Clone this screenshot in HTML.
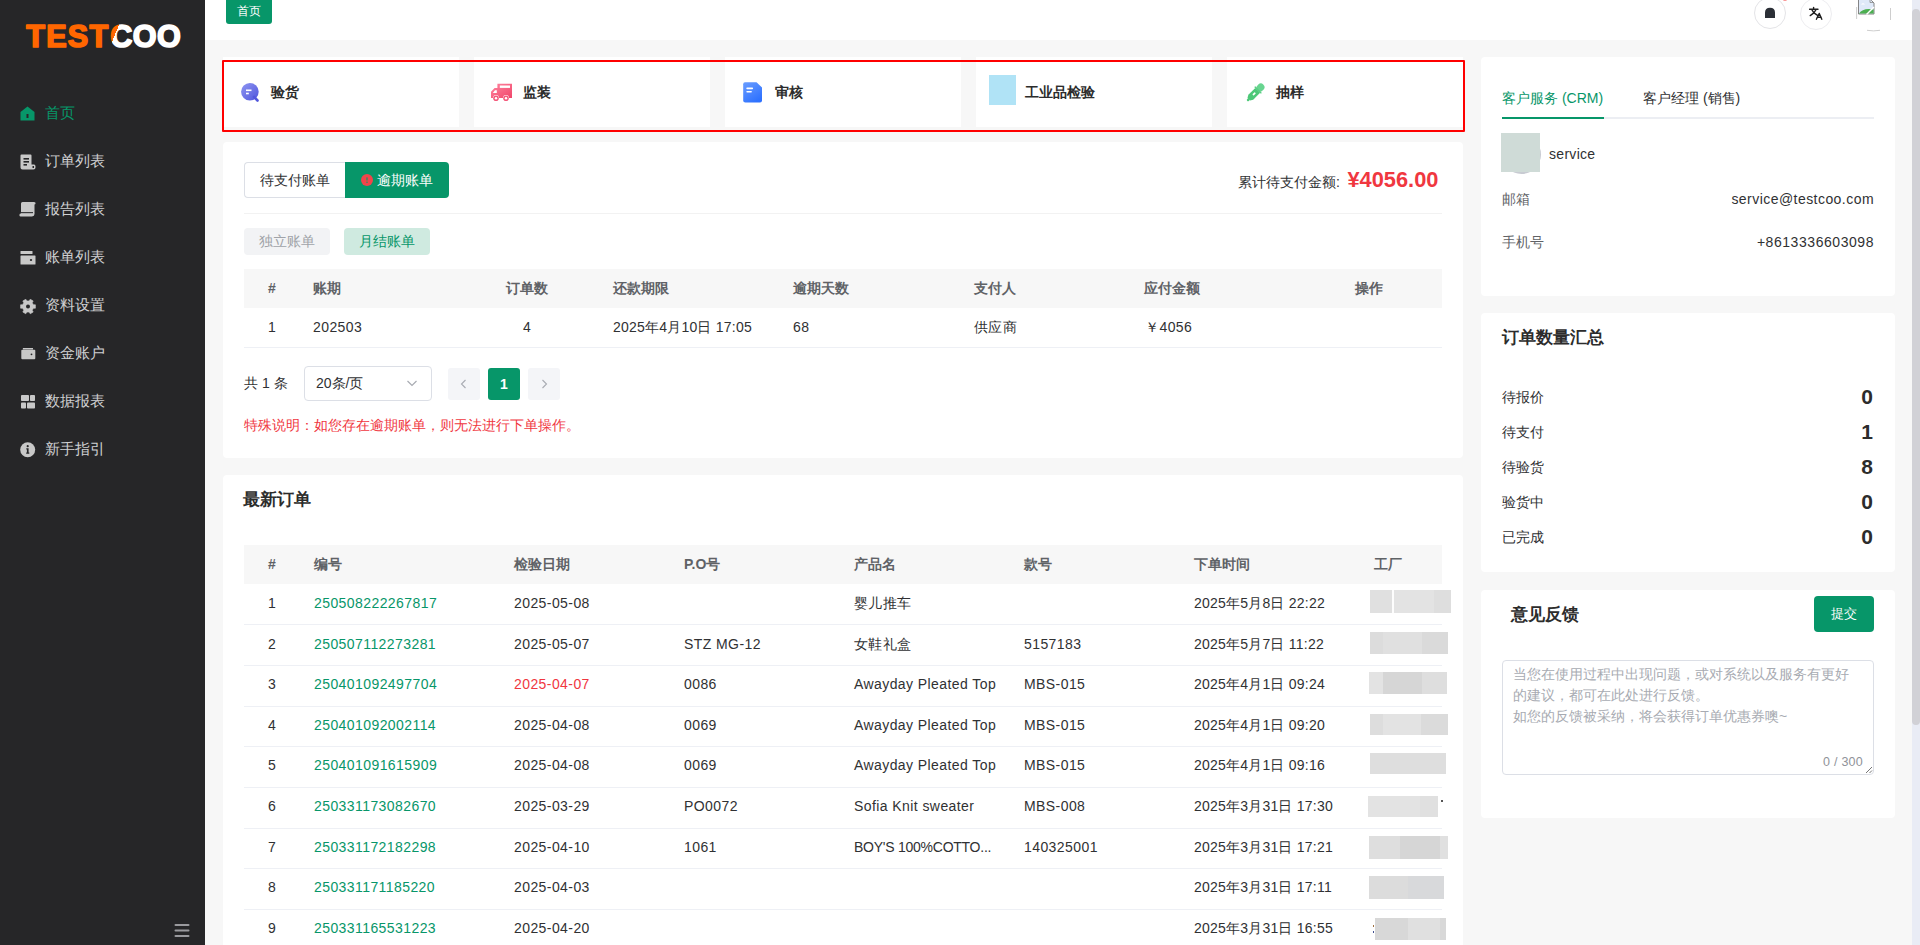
<!DOCTYPE html>
<html><head><meta charset="utf-8">
<style>
*{box-sizing:border-box;margin:0;padding:0}
html,body{width:1920px;height:945px;overflow:hidden}
body{font-family:"Liberation Sans",sans-serif;font-size:14px;color:#303133;background:#f7f7f7;position:relative}
.abs{position:absolute}
.side{position:absolute;left:0;top:0;width:205px;height:945px;background:#262628}
.logo{position:absolute;left:25px;top:17px;font-weight:bold;font-size:31.5px;letter-spacing:0.4px;line-height:38px;white-space:nowrap}
.menu{position:absolute;left:0;width:205px;height:48px;color:#cfd0d2;font-size:15px;line-height:20px}
.menu .t{position:absolute;left:45px;top:3px}
.menu svg{position:absolute;left:20px;top:6px}
.hdr{position:absolute;left:205px;top:0;width:1707px;height:40px;background:#fff}
.card{position:absolute;background:#fff;border-radius:4px}
.g{color:#079669}
.scroll{position:absolute;left:1912px;top:0;width:8px;height:945px;background:#e9ecf5}
.thumb{position:absolute;left:1912px;top:9px;width:8px;height:716px;background:#d1d1d6;border-radius:4px}
.th{position:absolute;font-weight:bold;color:#5f6266;font-size:14px;line-height:20px;white-space:nowrap}
.td{position:absolute;color:#303133;font-size:14px;line-height:20px;white-space:nowrap;letter-spacing:0.42px}
</style></head><body>
<!-- sidebar -->
<div class="side">
  <svg class="abs" style="left:0;top:0" width="205" height="60" viewBox="0 0 205 60"><defs><linearGradient id="lg" gradientUnits="userSpaceOnUse" x1="107" y1="30" x2="124" y2="37"><stop offset="0.5" stop-color="#ff6600"/><stop offset="0.5" stop-color="#ffffff"/></linearGradient></defs><g font-family="Liberation Sans" font-weight="bold" font-size="30.6" stroke-width="1.7" stroke-linejoin="round"><text id="lt" x="26.3" y="47.3" fill="#ff6600" stroke="#ff6600" letter-spacing="1.2">TEST</text><text id="lc" x="110.2" y="47.3" fill="url(#lg)" stroke="url(#lg)" letter-spacing="0.5">COO</text></g></svg>

  <div class="menu g" style="top:89px;color:#079669"><svg width="15" height="15" viewBox="0 0 15 15" style="left:20px;top:17px"><path d="M7.5 0.5 L14.5 6 V14.5 H0.5 V6 Z" fill="#079669"/><rect x="6.5" y="8" width="2" height="4" fill="#262628"/></svg><span class="t" style="top:14px">首页</span></div>
  <div class="menu" style="top:137px"><svg width="17" height="17" viewBox="0 0 17 17" style="left:20px;top:17px"><path d="M1.5 0.5 H10.5 Q11.5 0.5 11.5 1.5 V10.5 H14 Q15.5 10.5 15.5 12.5 V13.5 Q15.5 15.5 13.5 15.5 H2.5 Q0.5 15.5 0.5 13.5 V1.5 Q0.5 0.5 1.5 0.5Z" fill="#c8c8c8"/><rect x="3.5" y="4" width="5.5" height="1.6" fill="#262628"/><rect x="3.5" y="7" width="5.5" height="1.6" fill="#262628"/><rect x="3.5" y="10" width="3.5" height="1.6" fill="#262628"/><rect x="12.5" y="12" width="1.5" height="2" fill="#262628"/></svg><span class="t" style="top:14px">订单列表</span></div>
  <div class="menu" style="top:185px"><svg width="17" height="17" viewBox="0 0 17 17" style="left:19px;top:17px"><path d="M3.5 0 H15 Q17 0 16.5 2 L15.5 2.5 V12 Q15.5 14 13 14.5 H1.5 Q0 14.5 0.5 12.5 Q0.5 11.5 2 11.5 V1.5 Q2 0 3.5 0Z" fill="#c8c8c8"/><rect x="2" y="10" width="12" height="1.2" fill="#3a3a3c"/></svg><span class="t" style="top:14px">报告列表</span></div>
  <div class="menu" style="top:233px"><svg width="17" height="17" viewBox="0 0 17 17" style="left:20px;top:17px"><rect x="0.5" y="1" width="12" height="3" rx="0.5" fill="#c8c8c8"/><rect x="0.5" y="5.5" width="15" height="9" rx="0.6" fill="#c8c8c8"/><ellipse cx="11" cy="10" rx="1.2" ry="0.9" fill="#262628"/></svg><span class="t" style="top:14px">账单列表</span></div>
  <div class="menu" style="top:281px"><svg width="17" height="17" viewBox="0 0 17 17" style="left:20px;top:17.5px"><path d="M12.85 4.70 L13.29 5.68 L15.41 5.79 L15.41 9.21 L13.29 9.32 L12.85 10.30 L12.23 11.17 L13.18 13.06 L10.22 14.77 L9.07 13.00 L8.00 13.10 L6.93 13.00 L5.78 14.77 L2.82 13.06 L3.77 11.17 L3.15 10.30 L2.71 9.32 L0.59 9.21 L0.59 5.79 L2.71 5.68 L3.15 4.70 L3.77 3.83 L2.82 1.94 L5.78 0.23 L6.93 2.00 L8.00 1.90 L9.07 2.00 L10.22 0.23 L13.18 1.94 L12.23 3.83Z" fill="#c8c8c8" stroke="#c8c8c8" stroke-width="0.6" stroke-linejoin="round"/><circle cx="8" cy="7.5" r="2" fill="#262628"/></svg><span class="t" style="top:14px">资料设置</span></div>
  <div class="menu" style="top:329px"><svg width="17" height="17" viewBox="0 0 17 17" style="left:21px;top:18px"><path d="M1.5 1 H12 V2.5 H2 V1.5Z" fill="#c8c8c8"/><rect x="0.3" y="2.8" width="14" height="9.5" rx="1" fill="#c8c8c8"/><circle cx="10.5" cy="7.3" r="0.9" fill="#262628"/></svg><span class="t" style="top:14px">资金账户</span></div>
  <div class="menu" style="top:377px"><svg width="16" height="16" viewBox="0 0 16 16" style="left:21px;top:18px"><rect x="0" y="0" width="8" height="6" rx="0.8" fill="#c8c8c8"/><rect x="9" y="0" width="5" height="6" rx="0.8" fill="#c8c8c8"/><rect x="0" y="7.5" width="5" height="6" rx="0.8" fill="#c8c8c8"/><rect x="6" y="7.5" width="8" height="6" rx="0.8" fill="#c8c8c8"/></svg><span class="t" style="top:14px">数据报表</span></div>
  <div class="menu" style="top:425px"><svg width="16" height="16" viewBox="0 0 16 16" style="left:20px;top:17px"><circle cx="7.7" cy="7.7" r="7.5" fill="#c8c8c8"/><circle cx="7.7" cy="4.2" r="1.1" fill="#262628"/><path d="M6.3 6.2 H8.6 V10.6 H9.3 V11.8 H6.2 V10.6 H6.9 V7.4 H6.3Z" fill="#262628"/></svg><span class="t" style="top:14px">新手指引</span></div>
  <svg class="abs" style="left:173px;top:922px" width="18" height="16" viewBox="0 0 18 16"><rect x="1.5" y="2" width="15" height="2" rx="1" fill="#9a9a9e"/><rect x="1.5" y="7.5" width="15" height="2" rx="1" fill="#9a9a9e"/><rect x="1.5" y="13" width="15" height="2" rx="1" fill="#9a9a9e"/></svg>
</div>
<div class="hdr"></div>
<div class="abs" style="left:226px;top:0;width:46px;height:24px;background:#079669;border-radius:0 0 3px 3px;color:#fff;font-size:12px;line-height:23px;text-align:center">首页</div>
<!-- header icons -->
<div class="abs" style="left:1754px;top:-3px;width:32px;height:32px;border:1px solid #e4e4e7;border-radius:50%"></div>
<svg class="abs" style="left:1764px;top:7px" width="12" height="12" viewBox="0 0 12 12"><path d="M1 11 V5.5 Q1 0.8 6 0.8 Q11 0.8 11 5.5 V11Z" fill="#2b2f36"/></svg>
<div class="abs" style="left:1783px;top:-2px;width:4px;height:3px;background:#f56c6c;border-radius:2px;opacity:.7"></div>
<div class="abs" style="left:1800px;top:-2px;width:32px;height:32px;border:1px solid #ededf0;border-radius:50%"></div>
<svg class="abs" style="left:1800px;top:0" width="35" height="30" viewBox="0 0 35 30"><g stroke="#1f1f1f" stroke-width="1.35" fill="none" stroke-linecap="round" stroke-linejoin="round"><path d="M9.6 9.2 H18"/><path d="M13.6 7.4 V9"/><path d="M11.8 9.6 L13.9 12.9 L16 9.6"/><path d="M13.9 12.9 L10.2 15.6"/><path d="M13.9 12.9 L17.6 15.4"/><path d="M16.4 19.3 L19.3 13.4 L21.8 19.3"/><path d="M17.4 17.2 H20.8"/></g></svg>
<svg class="abs" style="left:1850px;top:0" width="48" height="36" viewBox="0 0 48 36"><path d="M6.6 7 V19" stroke="#c8c8c8" stroke-width="0.9"/><path d="M40.5 8 V20" stroke="#c8c8c8" stroke-width="0.9"/><path d="M17 30.3 Q23.5 31.5 30 30.3" stroke="#c8c8c8" stroke-width="0.9" fill="none"/><path d="M8.5 -1 V14 H24 V3 L21.5 0.5 V-1" fill="#dfe9f8" stroke="#777" stroke-width="0.9"/><path d="M20 -1 V2.5 H24" fill="none" stroke="#888" stroke-width="0.8"/><path d="M9 13.6 Q13 7.5 23.6 9.5 V13.6Z" fill="#4caf50"/><path d="M16.5 14.5 L24 7" stroke="#fff" stroke-width="1.4"/><path d="M11 4.5 Q13 2 15 4.5Z" fill="#fff"/></svg>
<!-- quick cards -->
<div class="card" style="left:223px;top:57px;width:236px;height:70px;border-radius:0"></div>
<div class="card" style="left:474px;top:57px;width:236px;height:70px;border-radius:0"></div>
<div class="card" style="left:725px;top:57px;width:236px;height:70px;border-radius:0"></div>
<div class="card" style="left:976px;top:57px;width:236px;height:70px;border-radius:0"></div>
<div class="card" style="left:1227px;top:57px;width:236px;height:70px;border-radius:0"></div>
<div class="abs" style="left:222px;top:60px;width:1243px;height:72px;border:2px solid #ff0000;border-radius:1px"></div>
<svg class="abs" style="left:241px;top:83px" width="19" height="20" viewBox="0 0 19 20"><defs><linearGradient id="gp" x1="0" y1="0" x2="1" y2="1"><stop offset="0" stop-color="#8f96f2"/><stop offset="1" stop-color="#4f55dc"/></linearGradient></defs><circle cx="8.9" cy="8.8" r="8.8" fill="url(#gp)"/><path d="M13 14 L16.5 17.5" stroke="#5257dc" stroke-width="2.6" stroke-linecap="round"/><rect x="5" y="6.5" width="5.5" height="1.6" fill="#fff"/><rect x="5" y="9.7" width="2.8" height="1.6" fill="#fff"/></svg>
<div class="abs" style="left:271px;top:82px;font-size:14px;font-weight:bold;color:#2c2c2c;line-height:20px">验货</div>
<svg class="abs" style="left:491px;top:83px" width="22" height="19" viewBox="0 0 22 19"><defs><linearGradient id="gr" x1="0" y1="0" x2="1" y2="1"><stop offset="0" stop-color="#ff86a0"/><stop offset="1" stop-color="#f0456a"/></linearGradient></defs><path d="M6.4 0.8 H21 V15 H18 A3 3 0 0 0 12 15 H8 A3 3 0 0 0 2 15 H0 V8.8 L3.6 5 H6.4Z" fill="url(#gr)"/><rect x="8.8" y="2.5" width="10.2" height="2.4" fill="#fff"/><path d="M1.8 10 L4 7.2 H5.8 V10Z" fill="#fff"/><circle cx="5" cy="15.3" r="2.8" fill="#f35a7c"/><circle cx="5" cy="15.3" r="1.2" fill="#fff"/><circle cx="15" cy="15.3" r="2.8" fill="#f35a7c"/><circle cx="15" cy="15.3" r="1.2" fill="#fff"/></svg>
<div class="abs" style="left:523px;top:82px;font-size:14px;font-weight:bold;color:#2c2c2c;line-height:20px">监装</div>
<svg class="abs" style="left:743px;top:82px" width="20" height="21" viewBox="0 0 20 21"><defs><linearGradient id="gb" x1="0" y1="0" x2="0.6" y2="1"><stop offset="0" stop-color="#6a9dff"/><stop offset="1" stop-color="#2f72ff"/></linearGradient></defs><path d="M2 0.3 H13.5 L19 5.5 V18.5 Q19 20.6 17 20.6 H2.3 Q0.2 20.6 0.2 18.5 V2.3 Q0.2 0.3 2 0.3Z" fill="url(#gb)"/><rect x="3.3" y="5.6" width="6.8" height="1.6" rx="0.8" fill="#fff"/><rect x="3.3" y="8.9" width="5.6" height="1.6" rx="0.8" fill="#fff"/></svg>
<div class="abs" style="left:775px;top:82px;font-size:14px;font-weight:bold;color:#2c2c2c;line-height:20px">审核</div>
<div class="abs" style="left:989px;top:75px;width:27px;height:30px;background:#b0e3f6"></div>
<div class="abs" style="left:1025px;top:82px;font-size:14px;font-weight:bold;color:#2c2c2c;line-height:20px">工业品检验</div>
<svg class="abs" style="left:1244px;top:81px" width="24" height="24" viewBox="0 0 24 24"><g transform="translate(11.2 11.8) rotate(45) scale(1.1) translate(0 -0.3)"><rect x="-3.3" y="-10.2" width="6.6" height="7.5" rx="3.2" fill="#68d590"/><rect x="-4.3" y="-4" width="8.6" height="1.3" rx="0.5" fill="#5ccd85"/><path d="M-3.1 -2.9 H3.1 V6 L1.6 8.6 H-1.6 L-3.1 6Z" fill="#4dc878"/><rect x="-1.1" y="8" width="2.2" height="2.6" rx="1" fill="#4dc878"/><rect x="-0.8" y="0.2" width="1.6" height="3" rx="0.5" fill="#fff"/></g></svg>
<div class="abs" style="left:1276px;top:82px;font-size:14px;font-weight:bold;color:#2c2c2c;line-height:20px">抽样</div>
<div class="card" style="left:223px;top:142px;width:1240px;height:316px"></div>
<div class="abs" style="left:244px;top:162px;width:101px;height:36px;border:1px solid #dcdfe6;border-right:none;border-radius:4px 0 0 4px;background:#fff;color:#303133;font-size:14px;line-height:34px;text-align:center">待支付账单</div>
<div class="abs" style="left:345px;top:162px;width:104px;height:36px;background:#079669;border-radius:0 4px 4px 0;color:#fff;font-size:14px;line-height:36px"><svg style="position:absolute;left:16px;top:11.5px" width="12" height="12" viewBox="0 0 12 12"><circle cx="6" cy="6" r="6" fill="#f2444a"/><rect x="5.1" y="3.3" width="1.8" height="3.3" rx="0.6" fill="#3a8a60" opacity=".8"/><rect x="5.1" y="7.6" width="1.8" height="1.3" rx="0.5" fill="#3a8a60" opacity=".8"/></svg><span style="position:absolute;left:32px;top:0">逾期账单</span></div>
<div class="abs" style="left:1238px;top:172px;font-size:14px;color:#303133;line-height:20px;white-space:nowrap">累计待支付金额:</div>
<div class="abs" style="left:1347.5px;top:166px;font-size:21.8px;font-weight:bold;color:#f0373f;line-height:28px;white-space:nowrap">¥4056.00</div>
<div class="abs" style="left:244px;top:213px;width:1198px;height:1px;background:#f2f2f2"></div>
<div class="abs" style="left:244px;top:228px;width:86px;height:27px;background:#f2f3f5;border-radius:4px;color:#a0a3a8;font-size:14px;line-height:27px;text-align:center">独立账单</div>
<div class="abs" style="left:344px;top:228px;width:86px;height:27px;background:#cfeae0;border-radius:4px;color:#079669;font-size:14px;line-height:27px;text-align:center">月结账单</div>
<div class="abs" style="left:244px;top:269px;width:1198px;height:39px;background:#f7f7f7"></div>
<div class="abs" style="left:244px;top:347px;width:1198px;height:1px;background:#eef0f5"></div>
<div class="th" style="left:212px;top:278px;width:120px;text-align:center">#</div>
<div class="th" style="left:313px;top:278px">账期</div>
<div class="th" style="left:467px;top:278px;width:120px;text-align:center">订单数</div>
<div class="th" style="left:613px;top:278px">还款期限</div>
<div class="th" style="left:793px;top:278px">逾期天数</div>
<div class="th" style="left:974px;top:278px">支付人</div>
<div class="th" style="left:1144px;top:278px">应付金额</div>
<div class="th" style="left:1309px;top:278px;width:120px;text-align:center">操作</div>
<div class="td" style="left:212px;top:317px;width:120px;text-align:center;">1</div>
<div class="td" style="left:313px;top:317px;">202503</div>
<div class="td" style="left:467px;top:317px;width:120px;text-align:center;">4</div>
<div class="td" style="left:613px;top:317px;letter-spacing:0.22px;">2025年4月10日 17:05</div>
<div class="td" style="left:793px;top:317px;">68</div>
<div class="td" style="left:974px;top:317px;">供应商</div>
<div class="td" style="left:1145px;top:317px;">￥4056</div>
<div class="abs" style="left:244px;top:373px;font-size:14px;color:#303133;line-height:20px;white-space:nowrap">共 1 条</div>
<div class="abs" style="left:304px;top:366px;width:128px;height:35px;border:1px solid #dcdfe6;border-radius:4px;background:#fff"></div>
<div class="abs" style="left:316px;top:373px;font-size:14px;color:#303133;line-height:20px;white-space:nowrap">20条/页</div>
<svg class="abs" style="left:406px;top:378px" width="12" height="10" viewBox="0 0 12 10"><path d="M1.5 3 L6 7.5 L10.5 3" stroke="#a8abb2" stroke-width="1.2" fill="none"/></svg>
<div class="abs" style="left:448px;top:368px;width:32px;height:32px;background:#f4f5f8;border-radius:3px"></div>
<svg class="abs" style="left:458px;top:378px" width="12" height="12" viewBox="0 0 12 12"><path d="M7.5 2 L3.5 6 L7.5 10" stroke="#a8abb2" stroke-width="1.1" fill="none"/></svg>
<div class="abs" style="left:488px;top:368px;width:32px;height:32px;background:#079669;border-radius:3px;color:#fff;font-weight:bold;font-size:14px;line-height:32px;text-align:center">1</div>
<div class="abs" style="left:528px;top:368px;width:32px;height:32px;background:#f4f5f8;border-radius:3px"></div>
<svg class="abs" style="left:538px;top:378px" width="12" height="12" viewBox="0 0 12 12"><path d="M4.5 2 L8.5 6 L4.5 10" stroke="#a8abb2" stroke-width="1.1" fill="none"/></svg>
<div class="abs" style="left:244px;top:416px;font-size:13.6px;color:#f0373f;line-height:20px;white-space:nowrap">特殊说明：如您存在逾期账单，则无法进行下单操作。</div>
<div class="card" style="left:223px;top:475px;width:1240px;height:480px"></div>
<div class="abs" style="left:243px;top:489px;font-size:17px;font-weight:bold;color:#2c2c2c;line-height:22px">最新订单</div>
<div class="abs" style="left:244px;top:545px;width:1198px;height:39px;background:#f7f7f7"></div>
<div class="th" style="left:212px;top:554px;width:120px;text-align:center">#</div>
<div class="th" style="left:314px;top:554px">编号</div>
<div class="th" style="left:514px;top:554px">检验日期</div>
<div class="th" style="left:684px;top:554px">P.O号</div>
<div class="th" style="left:854px;top:554px">产品名</div>
<div class="th" style="left:1024px;top:554px">款号</div>
<div class="th" style="left:1194px;top:554px">下单时间</div>
<div class="th" style="left:1374px;top:554px">工厂</div>
<div class="abs" style="left:244px;top:624.30px;width:1198px;height:1px;background:#eef0f5"></div>
<div class="td" style="left:212px;top:592.91px;width:120px;text-align:center;">1</div>
<div class="td" style="left:314px;top:592.91px;color:#079669;">250508222267817</div>
<div class="td" style="left:514px;top:592.91px;">2025-05-08</div>
<div class="td" style="left:684px;top:592.91px;"></div>
<div class="td" style="left:854px;top:592.91px;">婴儿推车</div>
<div class="td" style="left:1024px;top:592.91px;"></div>
<div class="td" style="left:1194px;top:592.91px;letter-spacing:0.22px;">2025年5月8日 22:22</div>
<div class="abs" style="left:1370px;top:590px;width:22px;height:23.0px;background:#e0e0e0"></div>
<div class="abs" style="left:1392px;top:590px;width:2px;height:23.0px;background:#fdfdfd"></div>
<div class="abs" style="left:1394px;top:590px;width:40px;height:23.0px;background:#e3e3e3"></div>
<div class="abs" style="left:1434px;top:590px;width:17px;height:23.0px;background:#dedede"></div>
<div class="abs" style="left:244px;top:664.94px;width:1198px;height:1px;background:#eef0f5"></div>
<div class="td" style="left:212px;top:633.55px;width:120px;text-align:center;">2</div>
<div class="td" style="left:314px;top:633.55px;color:#079669;">250507112273281</div>
<div class="td" style="left:514px;top:633.55px;">2025-05-07</div>
<div class="td" style="left:684px;top:633.55px;">STZ MG-12</div>
<div class="td" style="left:854px;top:633.55px;">女鞋礼盒</div>
<div class="td" style="left:1024px;top:633.55px;">5157183</div>
<div class="td" style="left:1194px;top:633.55px;letter-spacing:0.22px;">2025年5月7日 11:22</div>
<div class="abs" style="left:1370px;top:632px;width:13px;height:22.0px;background:#dcdcdc"></div>
<div class="abs" style="left:1383px;top:632px;width:39px;height:22.0px;background:#e0e0e0"></div>
<div class="abs" style="left:1422px;top:632px;width:26px;height:22.0px;background:#dadada"></div>
<div class="abs" style="left:244px;top:705.58px;width:1198px;height:1px;background:#eef0f5"></div>
<div class="td" style="left:212px;top:674.19px;width:120px;text-align:center;">3</div>
<div class="td" style="left:314px;top:674.19px;color:#079669;">250401092497704</div>
<div class="td" style="left:514px;top:674.19px;color:#f0373f;">2025-04-07</div>
<div class="td" style="left:684px;top:674.19px;">0086</div>
<div class="td" style="left:854px;top:674.19px;">Awayday Pleated Top</div>
<div class="td" style="left:1024px;top:674.19px;">MBS-015</div>
<div class="td" style="left:1194px;top:674.19px;letter-spacing:0.22px;">2025年4月1日 09:24</div>
<div class="abs" style="left:1369px;top:672px;width:14px;height:22.0px;background:#e3e3e3"></div>
<div class="abs" style="left:1383px;top:672px;width:39px;height:22.0px;background:#d6d6d6"></div>
<div class="abs" style="left:1422px;top:672px;width:25px;height:22.0px;background:#dedede"></div>
<div class="abs" style="left:244px;top:746.22px;width:1198px;height:1px;background:#eef0f5"></div>
<div class="td" style="left:212px;top:714.83px;width:120px;text-align:center;">4</div>
<div class="td" style="left:314px;top:714.83px;color:#079669;">250401092002114</div>
<div class="td" style="left:514px;top:714.83px;">2025-04-08</div>
<div class="td" style="left:684px;top:714.83px;">0069</div>
<div class="td" style="left:854px;top:714.83px;">Awayday Pleated Top</div>
<div class="td" style="left:1024px;top:714.83px;">MBS-015</div>
<div class="td" style="left:1194px;top:714.83px;letter-spacing:0.22px;">2025年4月1日 09:20</div>
<div class="abs" style="left:1370px;top:714px;width:13px;height:20.5px;background:#dddddd"></div>
<div class="abs" style="left:1383px;top:714px;width:38px;height:20.5px;background:#e3e3e3"></div>
<div class="abs" style="left:1421px;top:714px;width:27px;height:20.5px;background:#dbdbdb"></div>
<div class="abs" style="left:244px;top:786.86px;width:1198px;height:1px;background:#eef0f5"></div>
<div class="td" style="left:212px;top:755.47px;width:120px;text-align:center;">5</div>
<div class="td" style="left:314px;top:755.47px;color:#079669;">250401091615909</div>
<div class="td" style="left:514px;top:755.47px;">2025-04-08</div>
<div class="td" style="left:684px;top:755.47px;">0069</div>
<div class="td" style="left:854px;top:755.47px;">Awayday Pleated Top</div>
<div class="td" style="left:1024px;top:755.47px;">MBS-015</div>
<div class="td" style="left:1194px;top:755.47px;letter-spacing:0.22px;">2025年4月1日 09:16</div>
<div class="abs" style="left:1370px;top:753px;width:76px;height:21.0px;background:#dedede"></div>
<div class="abs" style="left:244px;top:827.50px;width:1198px;height:1px;background:#eef0f5"></div>
<div class="td" style="left:212px;top:796.11px;width:120px;text-align:center;">6</div>
<div class="td" style="left:314px;top:796.11px;color:#079669;">250331173082670</div>
<div class="td" style="left:514px;top:796.11px;">2025-03-29</div>
<div class="td" style="left:684px;top:796.11px;">PO0072</div>
<div class="td" style="left:854px;top:796.11px;">Sofia Knit sweater</div>
<div class="td" style="left:1024px;top:796.11px;">MBS-008</div>
<div class="td" style="left:1194px;top:796.11px;letter-spacing:0.22px;">2025年3月31日 17:30</div>
<div class="abs" style="left:1368px;top:796px;width:52px;height:20.6px;background:#e3e3e3"></div>
<div class="abs" style="left:1420px;top:796px;width:18px;height:20.6px;background:#e0e0e0"></div>
<div class="abs" style="left:244px;top:868.14px;width:1198px;height:1px;background:#eef0f5"></div>
<div class="td" style="left:212px;top:836.75px;width:120px;text-align:center;">7</div>
<div class="td" style="left:314px;top:836.75px;color:#079669;">250331172182298</div>
<div class="td" style="left:514px;top:836.75px;">2025-04-10</div>
<div class="td" style="left:684px;top:836.75px;">1061</div>
<div class="td" style="left:854px;top:836.75px;letter-spacing:-0.25px">BOY'S 100%COTTO...</div>
<div class="td" style="left:1024px;top:836.75px;">140325001</div>
<div class="td" style="left:1194px;top:836.75px;letter-spacing:0.22px;">2025年3月31日 17:21</div>
<div class="abs" style="left:1369px;top:836px;width:31px;height:22.5px;background:#dedede"></div>
<div class="abs" style="left:1400px;top:836px;width:40px;height:22.5px;background:#d6d6d6"></div>
<div class="abs" style="left:1440px;top:836px;width:8px;height:22.5px;background:#e0e0e0"></div>
<div class="abs" style="left:244px;top:908.78px;width:1198px;height:1px;background:#eef0f5"></div>
<div class="td" style="left:212px;top:877.39px;width:120px;text-align:center;">8</div>
<div class="td" style="left:314px;top:877.39px;color:#079669;">250331171185220</div>
<div class="td" style="left:514px;top:877.39px;">2025-04-03</div>
<div class="td" style="left:684px;top:877.39px;"></div>
<div class="td" style="left:854px;top:877.39px;"></div>
<div class="td" style="left:1024px;top:877.39px;"></div>
<div class="td" style="left:1194px;top:877.39px;letter-spacing:0.22px;">2025年3月31日 17:11</div>
<div class="abs" style="left:1369px;top:876px;width:39px;height:22.7px;background:#dcdcdc"></div>
<div class="abs" style="left:1408px;top:876px;width:36px;height:22.7px;background:#d8d9db"></div>
<div class="abs" style="left:244px;top:949.42px;width:1198px;height:1px;background:#eef0f5"></div>
<div class="td" style="left:212px;top:918.03px;width:120px;text-align:center;">9</div>
<div class="td" style="left:314px;top:918.03px;color:#079669;">250331165531223</div>
<div class="td" style="left:514px;top:918.03px;">2025-04-20</div>
<div class="td" style="left:684px;top:918.03px;"></div>
<div class="td" style="left:854px;top:918.03px;"></div>
<div class="td" style="left:1024px;top:918.03px;"></div>
<div class="td" style="left:1194px;top:918.03px;letter-spacing:0.22px;">2025年3月31日 16:55</div>
<div class="abs" style="left:1375px;top:917.6px;width:33px;height:22.0px;background:#d8d8d8"></div>
<div class="abs" style="left:1408px;top:917.6px;width:32px;height:22.0px;background:#e0e0e0"></div>
<div class="abs" style="left:1440px;top:917.6px;width:6px;height:22.0px;background:#d8d8d8"></div>
<div class="card" style="left:1481px;top:57px;width:414px;height:239px"></div>
<div class="abs" style="left:1502px;top:88px;font-size:14px;color:#079669;line-height:20px;white-space:nowrap">客户服务 (CRM)</div>
<div class="abs" style="left:1643px;top:88px;font-size:14px;color:#303133;line-height:20px;white-space:nowrap">客户经理 (销售)</div>
<div class="abs" style="left:1502px;top:117px;width:372px;height:2px;background:#eceef3"></div>
<div class="abs" style="left:1502px;top:117px;width:102px;height:2px;background:#079669"></div>
<div class="abs" style="left:1502px;top:135px;width:39px;height:39px;border-radius:50%;background:#c8cbd2"></div>
<div class="abs" style="left:1501px;top:133px;width:39px;height:39px;background:#cfdbd7"></div>
<div class="abs" style="left:1549px;top:144px;font-size:14px;color:#303133;line-height:20px;letter-spacing:0.3px">service</div>
<div class="abs" style="left:1502px;top:189px;font-size:14px;color:#606266;line-height:20px">邮箱</div>
<div class="abs" style="left:1674px;top:189px;width:200px;text-align:right;font-size:14px;color:#303133;line-height:20px;letter-spacing:0.45px">service@testcoo.com</div>
<div class="abs" style="left:1502px;top:232px;font-size:14px;color:#606266;line-height:20px">手机号</div>
<div class="abs" style="left:1674px;top:232px;width:200px;text-align:right;font-size:14px;color:#303133;line-height:20px;letter-spacing:0.55px">+8613336603098</div>
<div class="card" style="left:1481px;top:313px;width:414px;height:259px"></div>
<div class="abs" style="left:1502px;top:327px;font-size:17px;font-weight:bold;color:#2c2c2c;line-height:22px">订单数量汇总</div>
<div class="abs" style="left:1502px;top:387px;font-size:14px;color:#303133;line-height:20px">待报价</div>
<div class="abs" style="left:1773px;top:384px;width:100px;text-align:right;font-size:21px;font-weight:bold;color:#2c2c2c;line-height:26px">0</div>
<div class="abs" style="left:1502px;top:422px;font-size:14px;color:#303133;line-height:20px">待支付</div>
<div class="abs" style="left:1773px;top:419px;width:100px;text-align:right;font-size:21px;font-weight:bold;color:#2c2c2c;line-height:26px">1</div>
<div class="abs" style="left:1502px;top:457px;font-size:14px;color:#303133;line-height:20px">待验货</div>
<div class="abs" style="left:1773px;top:454px;width:100px;text-align:right;font-size:21px;font-weight:bold;color:#2c2c2c;line-height:26px">8</div>
<div class="abs" style="left:1502px;top:492px;font-size:14px;color:#303133;line-height:20px">验货中</div>
<div class="abs" style="left:1773px;top:489px;width:100px;text-align:right;font-size:21px;font-weight:bold;color:#2c2c2c;line-height:26px">0</div>
<div class="abs" style="left:1502px;top:527px;font-size:14px;color:#303133;line-height:20px">已完成</div>
<div class="abs" style="left:1773px;top:524px;width:100px;text-align:right;font-size:21px;font-weight:bold;color:#2c2c2c;line-height:26px">0</div>
<div class="card" style="left:1481px;top:590px;width:414px;height:228px"></div>
<div class="abs" style="left:1511px;top:604px;font-size:17px;font-weight:bold;color:#2c2c2c;line-height:22px">意见反馈</div>
<div class="abs" style="left:1814px;top:596px;width:60px;height:36px;background:#079669;border-radius:4px;color:#fff;font-size:13px;line-height:36px;text-align:center">提交</div>
<div class="abs" style="left:1502px;top:660px;width:372px;height:115px;border:1px solid #dcdfe6;border-radius:4px;background:#fff"></div>
<div class="abs" style="left:1513px;top:664px;width:342px;font-size:14px;color:#a8abb2;line-height:21px">当您在使用过程中出现问题，或对系统以及服务有更好的建议，都可在此处进行反馈。<br>如您的反馈被采纳，将会获得订单优惠券噢~</div>
<div class="abs" style="left:1763px;top:754px;width:100px;text-align:right;font-size:12.5px;letter-spacing:0.25px;color:#909399;line-height:16px">0 / 300</div>
<svg class="abs" style="left:1864px;top:765px" width="9" height="9" viewBox="0 0 9 9"><path d="M8 2 L2 8 M8 5.5 L5.5 8" stroke="#666" stroke-width="0.9"/></svg>
<div class="abs" style="left:1441px;top:800px;width:2px;height:1.5px;background:#555"></div>
<div class="abs" style="left:1373px;top:925px;width:1px;height:2px;background:#a07040"></div>
<div class="abs" style="left:1373px;top:931px;width:1px;height:2px;background:#405090"></div>
<div class="scroll"></div><div class="thumb"></div>
</body></html>
